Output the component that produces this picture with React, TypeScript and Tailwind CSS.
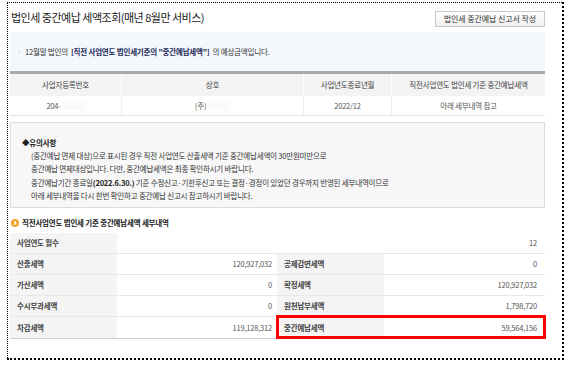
import React from "react";

interface DetailRow {
  label1: string;
  value1: string;
  label2: string;
  value2: string;
}

const rows: DetailRow[] = [
  { label1: "산출세액", value1: "120,927,032", label2: "공제감면세액", value2: "0" },
  { label1: "가산세액", value1: "0", label2: "확정세액", value2: "120,927,032" },
  { label1: "수시부과세액", value1: "0", label2: "원천납부세액", value2: "1,798,720" },
  { label1: "차감세액", value1: "119,128,312", label2: "중간예납세액", value2: "59,564,156" },
];

const SectionIcon = () => (
  <svg width="8" height="8" viewBox="0 0 8 8" className="shrink-0">
    <circle cx="4" cy="4" r="4" fill="#f2a22e" />
    <path d="M3.2 2.2 L5 4 L3.2 5.8" stroke="#fff" strokeWidth="1.3" fill="none" />
  </svg>
);

export default function App() {
  return (
    <div className="w-[570px] h-[370px] bg-white overflow-hidden font-['Noto_Sans_CJK_KR','Noto_Sans',sans-serif] text-[#333]">
      <div className="ml-[7px] mt-[2px] w-[557px] h-[358px] border-dotted border-black border-l border-t border-r-2 border-b-2 pl-[2px] pr-[17px]">
        {/* title */}
        <div className="flex items-center justify-between h-[29px]">
          <div className="text-[11px] tracking-[-0.5px] text-[#1a1a1a] pl-[1px]">
            법인세 중간예납 세액조회(매년 8월만 서비스)
          </div>
          <button className="h-[16px] mt-[3px] px-[8px] border border-[#c9c9c9] bg-gradient-to-b from-white to-[#f1f1f1] text-[8px] tracking-[-0.1px] leading-none text-[#333]">
            법인세 중간예납 신고서 작성
          </button>
        </div>

        {/* info */}
        <div className="h-[39px] bg-[#f4f7fb] flex items-center pl-[7px] text-[7.5px] tracking-[-0.2px]">
          <span className="text-[#999] mr-[4px]">·</span>
          <span>12월말 법인의</span>
          <span className="font-bold text-[#1d2a5a] mx-[3px]">
            [직전 사업연도 법인세기준의 "중간예납세액"]
          </span>
          <span>의 예상금액입니다.</span>
        </div>

        {/* summary table */}
        <div className="border-t-[3px] border-[#a9a9a9] text-[7.5px] tracking-[-0.2px]">
          <div className="grid grid-cols-[112px_182px_88px_153px] h-[22px] bg-[#f3f3f3] text-[#444]">
            <div className="flex items-center justify-center border-r border-white">사업자등록번호</div>
            <div className="flex items-center justify-center border-r border-white">상호</div>
            <div className="flex items-center justify-center border-r border-white">사업년도종료년월</div>
            <div className="flex items-center justify-center">직전사업연도 법인세 기준 중간예납세액</div>
          </div>
          <div className="grid grid-cols-[112px_182px_88px_153px] h-[20px] border-b border-[#e3e3e3] text-[#555]">
            <div className="flex items-center justify-center border-r border-[#eeeeee]">
              204-<span className="text-[#eeeeee] ml-[2px]">▒▒▒</span>
            </div>
            <div className="flex items-center justify-center border-r border-[#eeeeee]">
              (주)<span className="text-[#f2f2f2] ml-[2px]">▒▒▒</span>
            </div>
            <div className="flex items-center justify-center border-r border-[#eeeeee]">2022/12</div>
            <div className="flex items-center justify-center">아래 세부내역 참고</div>
          </div>
        </div>

        {/* notice */}
        <div className="mt-[6px] h-[86px] border border-[#dcdcdc] bg-[#f7f7f7] pl-[11px] pt-[13px] text-[7.5px] tracking-[-0.2px] leading-[13px]">
          <div className="font-bold text-[#222]">◆유의사항</div>
          <div className="pl-[9px]">
            <div>(중간예납 면제 대상)으로 표시된 경우 직전 사업연도 산출세액 기준 중간예납세액이 30만원미만으로</div>
            <div>중간예납 면제대상입니다. 다만, 중간예납세액은 최종 확인하시기 바랍니다.</div>
            <div className="mt-[1px]">
              중간예납기간 종료일<span className="font-bold text-[#222]">(2022.6.30.)</span> 기준 수정신고·기한후신고 또는 결정·경정이 있었던 경우까지 반영된 세부내역이므로
            </div>
            <div>아래 세부내역을 다시 한번 확인하고 중간예납 신고시 참고하시기 바랍니다.</div>
          </div>
        </div>

        {/* section heading */}
        <div className="flex items-center gap-[3px] h-[25px] pt-[4px] pl-[1px] text-[7.5px] font-bold tracking-[-0.2px] text-[#222]">
          <SectionIcon />
          <span>직전사업연도 법인세 기준 중간예납세액 세부내역</span>
        </div>

        {/* detail table */}
        <div className="text-[7.5px] tracking-[-0.2px] border-b border-[#cfcfcf]">
          <div className="grid grid-cols-[107px_428px] h-[21px] border-b border-[#e8e8e8]">
            <div className="flex items-center pl-[7px] bg-[#f4f4f4] font-bold text-[#444]">사업연도 월수</div>
            <div className="flex items-center justify-end pr-[8px] text-[#555]">12</div>
          </div>
          {rows.map((row, i) => (
            <div
              key={"row" + String(i)}
              className={
                "relative grid grid-cols-[107px_160px_107px_161px] h-[21px]" +
                (i < rows.length - 1 ? " border-b border-[#e8e8e8]" : "")
              }
            >
              <div className="flex items-center pl-[7px] bg-[#f4f4f4] font-bold text-[#444]">{row.label1}</div>
              <div className="flex items-center justify-end pr-[5px] text-[#555]">{row.value1}</div>
              <div className="flex items-center pl-[7px] bg-[#f4f4f4] font-bold text-[#444]">{row.label2}</div>
              <div className="flex items-center justify-end pr-[8px] text-[#555]">{row.value2}</div>
              {i === rows.length - 1 && (
                <div className="absolute left-[266px] top-[-2px] w-[270px] h-[24px] border-[3px] border-[#ff0000]" />
              )}
            </div>
          ))}
        </div>
      </div>
    </div>
  );
}
